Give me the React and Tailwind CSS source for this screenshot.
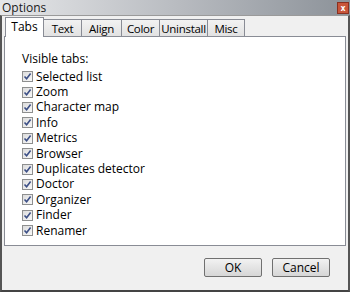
import React from "react";

const tabs = [
  { name: "Tabs", w: "w-[39px]" },
  { name: "Text", w: "w-[38px]" },
  { name: "Align", w: "w-[40px]" },
  { name: "Color", w: "w-[38px]" },
  { name: "Uninstall", w: "w-[48px]" },
  { name: "Misc", w: "w-[37px]" },
];

const items = [
  "Selected list",
  "Zoom",
  "Character map",
  "Info",
  "Metrics",
  "Browser",
  "Duplicates detector",
  "Doctor",
  "Organizer",
  "Finder",
  "Renamer",
];

function CheckBox() {
  return (
    <div className="w-[11px] h-[11px] border border-[#8e8f8f] bg-gradient-to-br from-[#dcdcdc] to-[#f8f8f8] flex items-center justify-center mr-[3px] shrink-0">
      <svg width="9" height="9" viewBox="0 0 9 9">
        <path
          d="M1.5 4.5 L3.6 6.8 L7.6 1.6"
          fill="none"
          stroke="#3c4f86"
          strokeWidth="1.6"
        />
      </svg>
    </div>
  );
}

function Button({ label }) {
  return (
    <div className="w-[58px] h-[19px] rounded-[2px] border border-[#707070] bg-gradient-to-b from-[#f2f2f2] to-[#d6d6d6] flex items-center justify-center text-[12px] text-black">
      {label}
    </div>
  );
}

export default function App() {
  return (
    <div className="w-[350px] h-[292px] flex flex-col font-['Open_Sans',sans-serif] text-black overflow-hidden">
      <div className="h-[15px] flex items-center justify-between bg-gradient-to-r from-[#e6e7e9] via-[#b9bcc1] to-[#8c9299] pl-[2px] pr-[1px]">
        <span className="text-[12px] leading-[15px] text-[#1a1a1a]">Options</span>
        <div className="w-[12px] h-[12px] bg-[#c8553a] border border-[#8a3020] flex items-center justify-center text-white text-[8px] leading-none font-bold">
          x
        </div>
      </div>
      <div className="flex-1 flex flex-col bg-[#f0f0f0] border-t border-l-2 border-r-2 border-b-2 border-t-[#9a9a9a] border-l-[#555] border-r-[#555] border-b-[#444] px-[2px]">
        <div className="flex items-end h-[20px] pl-[1px]">
          {tabs.map((t, i) =>
            i === 0 ? (
              <div
                key={t.name}
                className={`${t.w} h-[20px] bg-white border border-b-0 border-[#898c95] flex items-start justify-center pt-[1px] text-[12px] leading-[16px] relative top-[1px] z-10`}
              >
                {t.name}
              </div>
            ) : (
              <div
                key={t.name}
                className={`${t.w} h-[17px] bg-gradient-to-b from-[#f2f2f2] to-[#e2e2e2] border border-b-0 border-l-0 border-[#898c95] flex items-center justify-center text-[11.5px] tracking-[-0.3px] leading-[15px]`}
              >
                {t.name}
              </div>
            )
          )}
        </div>
        <div className="h-[210px] bg-white border border-[#898c95] pl-[17px] pt-[14px] text-[12px]">
          <div className="leading-[16px] mb-[2px]">Visible tabs:</div>
          {items.map((it) => (
            <div key={it} className="flex items-center h-[15.4px] leading-[14px]">
              <CheckBox />
              <span>{it}</span>
            </div>
          ))}
        </div>
        <div className="flex justify-end gap-[10px] pr-[16px] mt-[12px]">
          <Button label="OK" />
          <Button label="Cancel" />
        </div>
      </div>
    </div>
  );
}
